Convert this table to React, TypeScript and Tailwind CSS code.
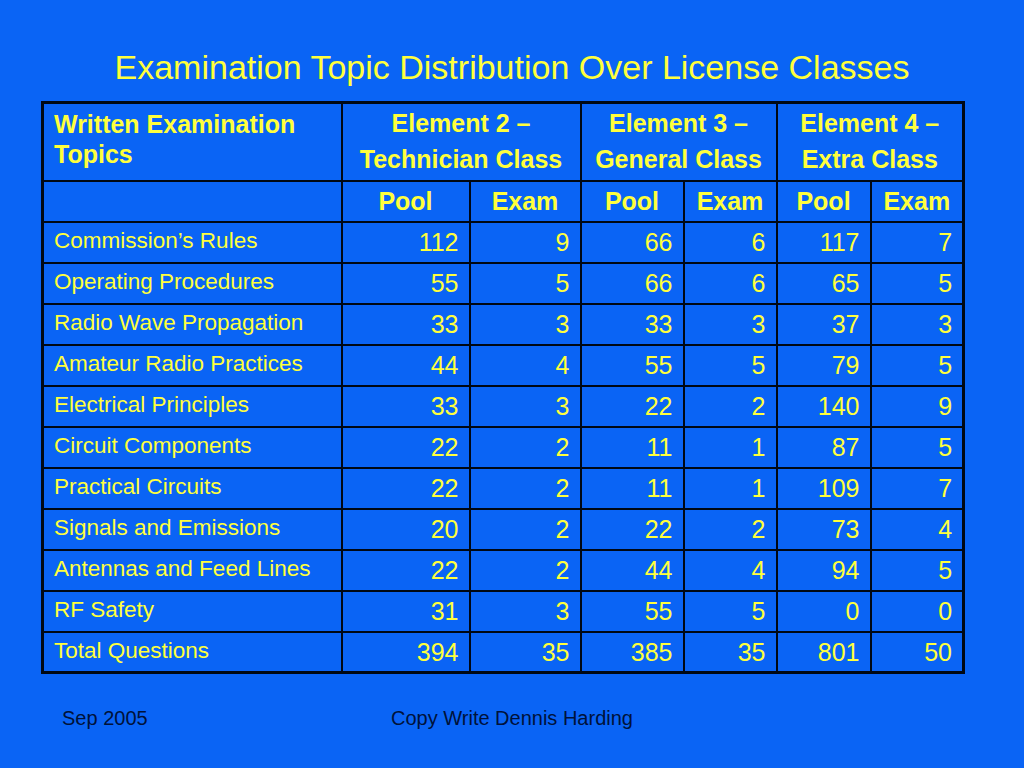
const rows: [string, number, number, number, number, number, number][] = [
  ['Commission’s Rules', 112, 9, 66, 6, 117, 7],
  ['Operating Procedures', 55, 5, 66, 6, 65, 5],
  ['Radio Wave Propagation', 33, 3, 33, 3, 37, 3],
  ['Amateur Radio Practices', 44, 4, 55, 5, 79, 5],
  ['Electrical Principles', 33, 3, 22, 2, 140, 9],
  ['Circuit Components', 22, 2, 11, 1, 87, 5],
  ['Practical Circuits', 22, 2, 11, 1, 109, 7],
  ['Signals and Emissions', 20, 2, 22, 2, 73, 4],
  ['Antennas and Feed Lines', 22, 2, 44, 4, 94, 5],
  ['RF Safety', 31, 3, 55, 5, 0, 0],
  ['Total Questions', 394, 35, 385, 35, 801, 50],
]

const elements = [
  ['Element 2 –', 'Technician Class'],
  ['Element 3 –', 'General Class'],
  ['Element 4 –', 'Extra Class'],
]

export default function App() {
  return (
    <div className="w-[1024px] h-[768px] bg-[#0a64f5] text-[#ffff3c] font-[family-name:'Liberation_Sans',Arial,sans-serif] flex flex-col">
      <h1 className="text-center text-[34px] leading-none pt-[50px] h-[101px]">
        Examination Topic Distribution Over License Classes
      </h1>

      <div className="pl-[41px]">
        <table className="table-fixed border-collapse border-[3px] border-[#000814] w-[924px]">
          <colgroup>
            <col className="w-[299px]" />
            <col className="w-[128px]" />
            <col className="w-[111px]" />
            <col className="w-[103px]" />
            <col className="w-[93px]" />
            <col className="w-[94px]" />
            <col className="w-[93px]" />
          </colgroup>
          <thead>
            <tr className="h-[78px]">
              <th className="border-2 border-[#000814] align-top text-left font-bold text-[25px] leading-[30px] pl-[10px] pt-[5px]">
                Written Examination<br />Topics
              </th>
              {elements.map(([a, b]) => (
                <th key={a} colSpan={2} className="border-2 border-[#000814] align-top text-center font-bold text-[25px] leading-[36px] pt-[1px]">
                  {a}<br />{b}
                </th>
              ))}
            </tr>
            <tr className="h-[41px]">
              <th className="border-2 border-[#000814]"></th>
              {['Pool', 'Exam', 'Pool', 'Exam', 'Pool', 'Exam'].map((h, i) => (
                <th key={i} className="border-2 border-[#000814] text-center font-bold text-[25px] leading-[30px] align-top pt-[4px]">
                  {h}
                </th>
              ))}
            </tr>
          </thead>
          <tbody>
            {rows.map(([topic, ...nums]) => (
              <tr key={topic} className="h-[41px]">
                <td className="border-2 border-[#000814] align-top text-[22.5px] leading-[26px] pl-[10px] pt-[5px]">{topic}</td>
                {nums.map((n, i) => (
                  <td key={i} className="border-2 border-[#000814] align-top text-right text-[25px] leading-[30px] pr-[10px] pt-[4px]">
                    {n}
                  </td>
                ))}
              </tr>
            ))}
          </tbody>
        </table>
      </div>

      <div className="relative mt-[32px] h-[24px] text-[#00123a] text-[20px] leading-[24px]">
        <span className="absolute left-[62px]">Sep 2005</span>
        <div className="text-center">Copy Write Dennis Harding</div>
      </div>
    </div>
  )
}
